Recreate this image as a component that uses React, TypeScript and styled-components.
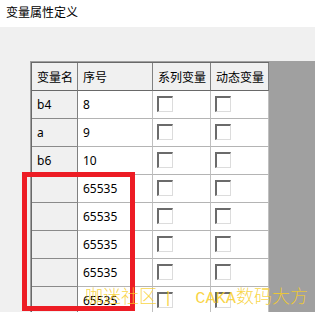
import React from "react";
import styled, { createGlobalStyle } from "styled-components";

const GlobalStyle = createGlobalStyle`
  html, body {
    margin: 0;
    padding: 0;
    background: #ffffff;
  }
  body {
    font-family: "Noto Sans", "Noto Sans CJK SC", sans-serif;
    font-size: 12px;
    color: #000000;
  }
`;

const Page = styled.div`
  position: relative;
  width: 315px;
  height: 312px;
  display: flex;
  flex-direction: column;
  overflow: hidden;
`;

const TitleBar = styled.div`
  height: 27px;
  box-sizing: border-box;
  padding: 4px 0 0 6px;
  background: #ffffff;
  font-family: "Noto Sans CJK SC", sans-serif;
  font-size: 12px;
  line-height: 16px;
`;

const Body = styled.div`
  flex: 1;
  display: flex;
  background: #f0f0f0;
  padding: 34px 0 0 30px;
  min-height: 0;
`;

const GridFrame = styled.div`
  flex: 1;
  display: flex;
  align-items: flex-start;
  background: #a0a0a0;
  border-top: 1px solid #a0a0a0;
  border-left: 1px solid #a0a0a0;
  overflow: hidden;
`;

const Grid = styled.div`
  display: grid;
  grid-template-columns: 46px 75px 58px 58px;
  grid-auto-rows: 28px;
  border-top: 1px solid #696969;
  border-left: 1px solid #696969;
  background: #ffffff;
`;

type CellKind = "header" | "rowhead" | "data";

const Cell = styled.div<{ $kind: CellKind }>`
  box-sizing: border-box;
  display: flex;
  align-items: center;
  padding-left: 5px;
  white-space: nowrap;
  overflow: hidden;
  font-family: ${(p) =>
    p.$kind === "header"
      ? `"Noto Sans CJK SC", sans-serif`
      : `"Noto Sans", "Noto Sans CJK SC", sans-serif`};
  font-size: 12px;
  background: ${(p) => (p.$kind === "data" ? "#ffffff" : "#f0f0f0")};
  border-right: 1px solid
    ${(p) => (p.$kind === "data" ? "#c0c0c0" : "#808080")};
  border-bottom: 1px solid
    ${(p) =>
      p.$kind === "header" ? "#696969" : p.$kind === "rowhead" ? "#8a8a8a" : "#b4b4b4"};
`;

const CheckCell = styled(Cell)`
  align-items: flex-start;
  padding: 5px 0 0 4px;
`;

const CheckBox = styled.span`
  display: block;
  width: 16px;
  height: 16px;
  box-sizing: border-box;
  background: #ffffff;
  border-top: 2px solid #6b6b6b;
  border-left: 2px solid #6b6b6b;
  border-right: 1px solid #dcdcdc;
  border-bottom: 1px solid #dcdcdc;
`;

const Highlight = styled.div`
  position: absolute;
  left: 22px;
  top: 172px;
  width: 113px;
  height: 139px;
  box-sizing: border-box;
  border: 5px solid #ed1c24;
  pointer-events: none;
`;

const Watermark = styled.div`
  position: absolute;
  left: 85px;
  top: 284px;
  display: flex;
  align-items: baseline;
  font-family: "Noto Sans CJK SC", sans-serif;
  font-weight: 300;
  font-size: 18px;
  line-height: 22px;
  color: rgba(248, 206, 40, 0.85);
  white-space: pre;
  pointer-events: none;
`;

const WatermarkLatin = styled.span<{ $ml?: number; $mr?: number }>`
  font-family: "Liberation Mono", monospace;
  font-size: 17px;
  margin-left: ${(p) => p.$ml ?? 0}px;
  margin-right: ${(p) => p.$mr ?? 0}px;
`;

const headers = ["变量名", "序号", "系列变量", "动态变量"];

const rows = [
  { name: "b4", index: "8" },
  { name: "a", index: "9" },
  { name: "b6", index: "10" },
  { name: "", index: "65535" },
  { name: "", index: "65535" },
  { name: "", index: "65535" },
  { name: "", index: "65535" },
  { name: "", index: "65535" },
];

export default function App() {
  return (
    <Page>
      <GlobalStyle />
      <TitleBar>变量属性定义</TitleBar>
      <Body>
        <GridFrame>
          <Grid>
            {headers.map((h) => (
              <Cell key={h} $kind="header">
                {h}
              </Cell>
            ))}
            {rows.map((r, i) => (
              <React.Fragment key={i}>
                <Cell $kind="rowhead">{r.name}</Cell>
                <Cell $kind="data">{r.index}</Cell>
                <CheckCell $kind="data">
                  <CheckBox />
                </CheckCell>
                <CheckCell $kind="data">
                  <CheckBox />
                </CheckCell>
              </React.Fragment>
            ))}
          </Grid>
        </GridFrame>
      </Body>
      <Highlight />
      <Watermark>
        <span>咖迷社区</span>
        <WatermarkLatin $ml={6} $mr={22}>|</WatermarkLatin>
        <WatermarkLatin>CAKA</WatermarkLatin>
        <span>数码大方</span>
      </Watermark>
    </Page>
  );
}
